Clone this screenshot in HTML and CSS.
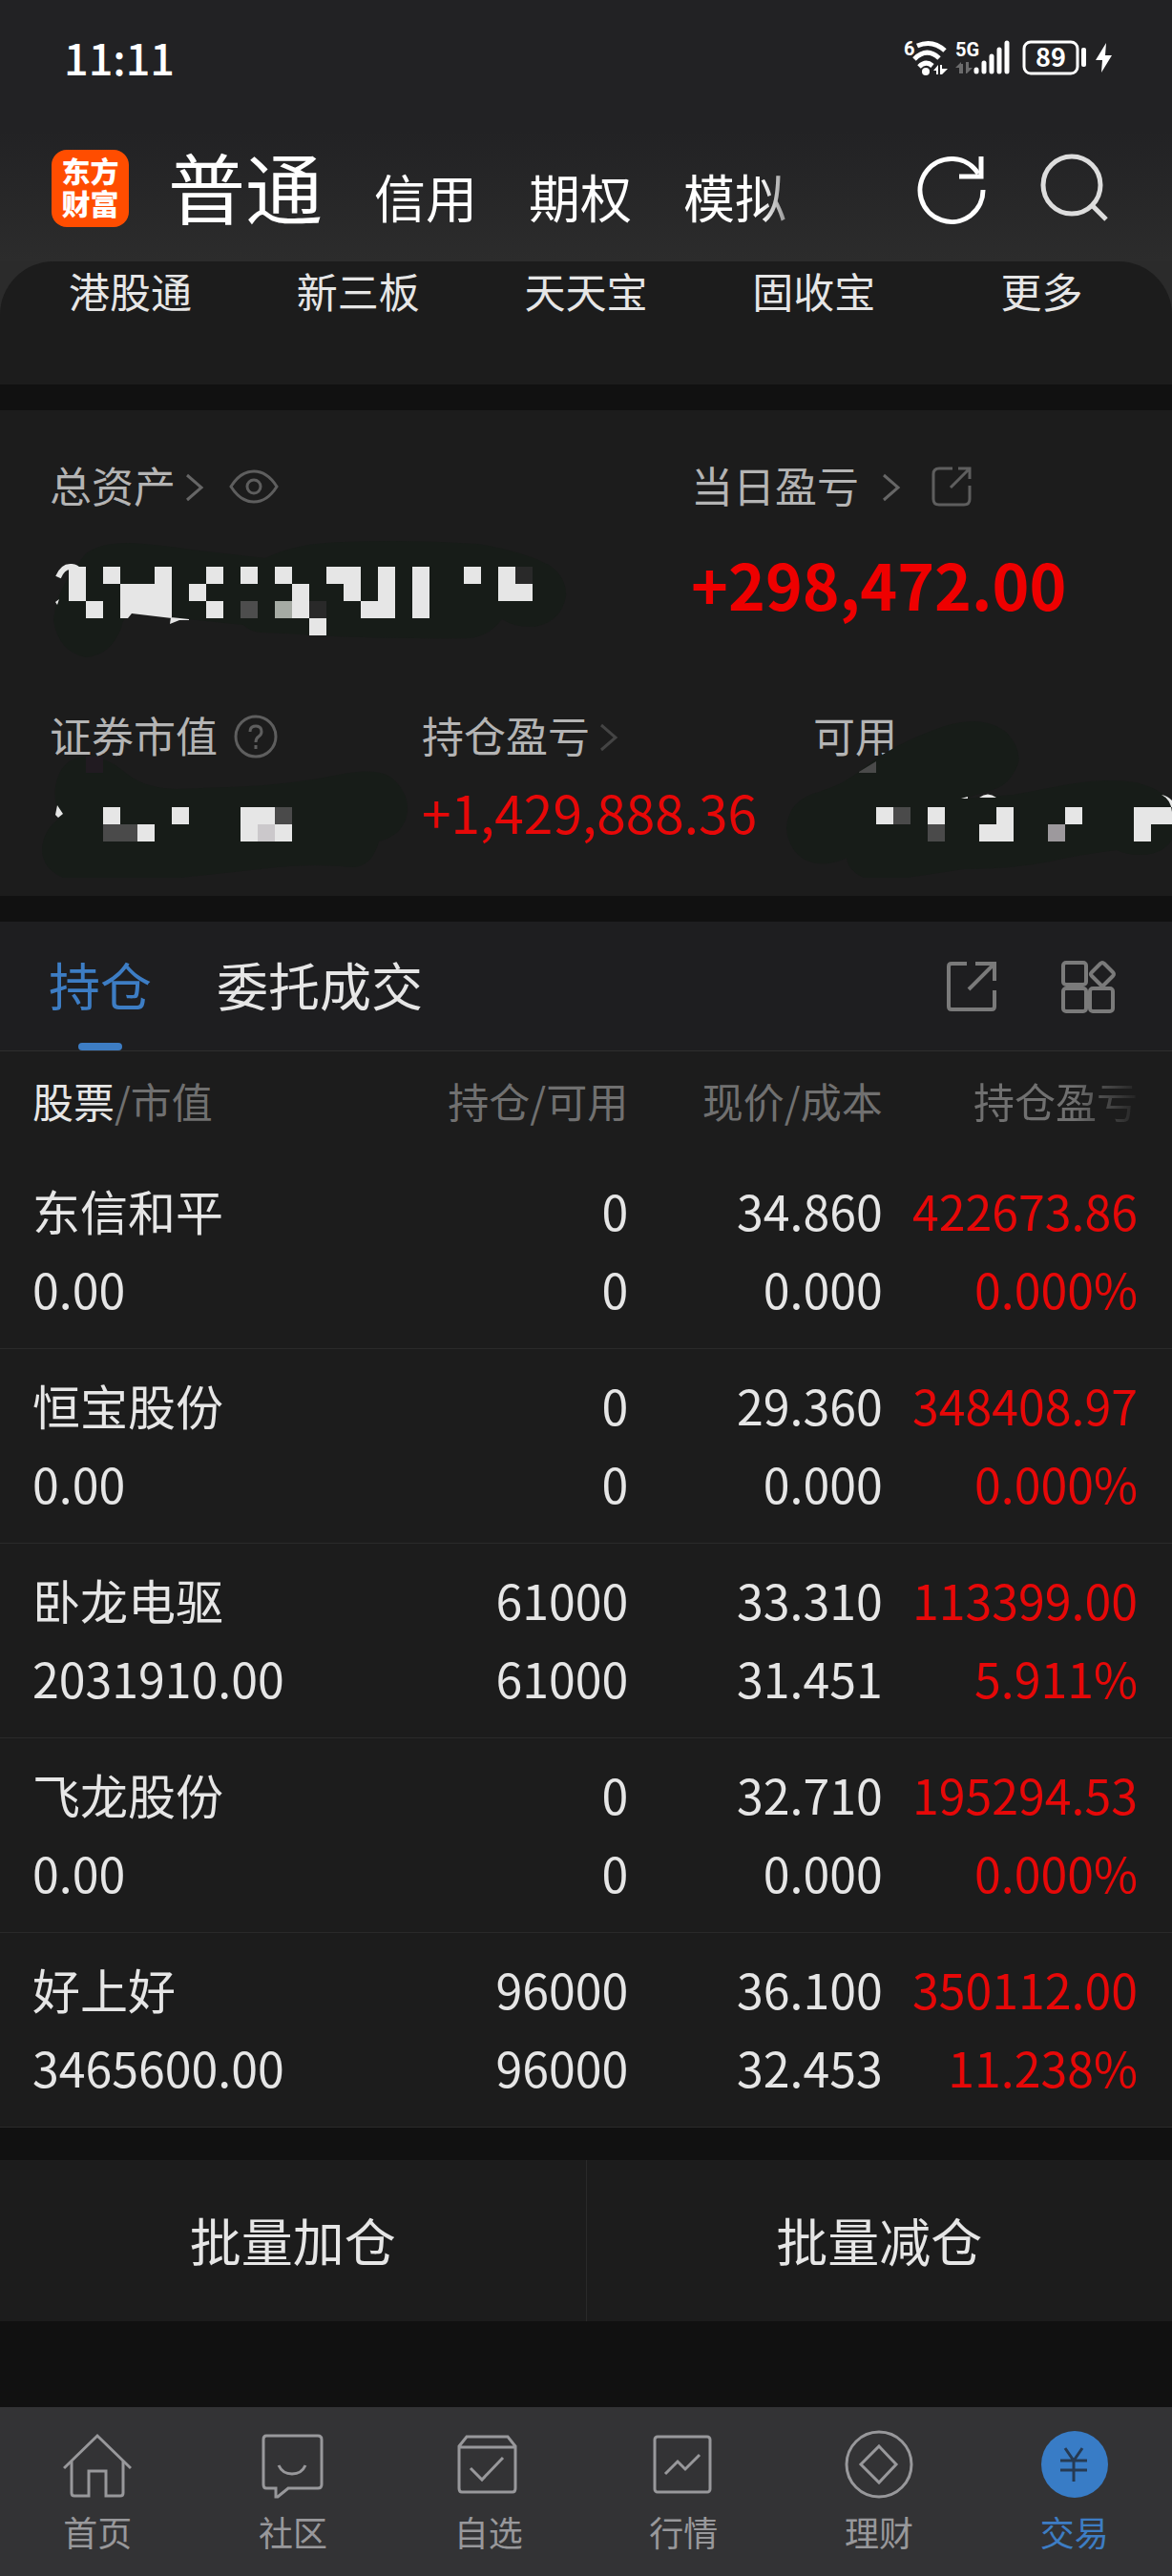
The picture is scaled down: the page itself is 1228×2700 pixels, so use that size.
FILE: index.html
```html
<!DOCTYPE html>
<html lang="zh-CN">
<head>
    <meta charset="UTF-8">
    <meta name="viewport" content="width=device-width, initial-scale=1.0">
    <title>交易</title>

    <link rel="stylesheet" href="styles.css">
</head>

<body>
    <header class="top">
        <div class="status-bar">
            <div class="time">11:11</div>
            <svg class="status-icons" viewBox="944 38 224 46" width="224" height="46">
                <text class="net" x="947" y="59">6</text>
                <g fill="none" stroke="#fff" stroke-width="5">
                    <path d="M961 49 Q977 42 990 54" />
                    <path d="M958 63 Q971 50 984 62" />
                    <path d="M963 71 Q970 64 977 70" />
                </g>
                <circle cx="970" cy="76" r="4" fill="#fff" />
                <path d="M978 75 L983 69 V79 H981 V75 Z M985 69 H987 V73 H993 L987 79 H985 Z" fill="#fff" />
                <text class="net" x="1001" y="60">5G</text>
                <path d="M1001 72 L1007 66 V78 H1005 V72 Z M1005 68 H1009 V78 H1005 Z M1012 66 H1015 V72 H1019 L1013 78 H1012 Z" fill="#6b6b6c" />
                <g stroke="#fff" stroke-width="5" stroke-linecap="round">
                    <path d="M1023 74 V76" />
                    <path d="M1031 67 V76" />
                    <path d="M1039 60 V76" />
                    <path d="M1047 53 V76" />
                    <path d="M1055 46 V76" />
                </g>
                <rect x="1073" y="45" width="56" height="33" rx="7" fill="none" stroke="#fff" stroke-width="3" />
                <rect x="1133" y="51" width="5" height="20" rx="2" fill="#fff" />
                <text class="battery" x="1101" y="71">89</text>
                <path d="M1159 46 L1148 64 H1155 L1154 77 L1165 59 H1158 Z" fill="#fff" />
            </svg>
        </div>
        <div class="header-row">
            <div class="logo">东方<br>财富</div>
            <nav class="account-tabs">
                <button class="account active">普通</button>
                <button class="account">信用</button>
                <button class="account">期权</button>
                <button class="account fade">模拟</button>
            </nav>
            <button class="icon-btn" aria-label="刷新">
                <svg viewBox="0 0 80 80" width="80" height="80" fill="none" stroke="#fff" stroke-width="5">
                    <path d="M72 42 A33 33 0 1 1 67 25" />
                    <path d="M70 7 V28 H47" />
                </svg>
            </button>
            <button class="icon-btn" aria-label="搜索">
                <svg viewBox="0 0 80 80" width="80" height="80" fill="none" stroke="#ddd" stroke-width="5">
                    <circle cx="38" cy="37" r="30" />
                    <path d="M59 58 L74 73" />
                </svg>
            </button>
        </div>
    </header>

    <div class="menu-wrap">
        <nav class="menu">
            <a href="#">港股通</a>
            <a href="#">新三板</a>
            <a href="#">天天宝</a>
            <a href="#">固收宝</a>
            <a href="#">更多</a>
        </nav>
    </div>

    <main>
        <section class="assets">
            <div class="assets-main">
                <div class="asset">
                    <div class="label">
                        总资产
                        <svg class="arrow" viewBox="0 0 20 32" width="20" height="32"><path d="M2 4 L17 17 L2 30" /></svg>
                        <button class="icon-btn eye" aria-label="隐藏金额">
                            <svg viewBox="0 0 52 36" width="52" height="36" fill="none" stroke="#5e5e5e" stroke-width="3">
                                <path d="M2 18 Q12 2 26 2 Q40 2 50 18 Q40 34 26 34 Q12 34 2 18 Z" />
                                <circle cx="26" cy="18" r="7" />
                            </svg>
                        </button>
                    </div>
                    <!-- covered amount -->
                    <svg class="covered big" viewBox="52 561 550 130" width="550" height="130">
                        <path class="smudge" d="M90 580 Q106 569 134 569 Q160 570 200 576 L278 585 Q310 569 360 568 Q430 565 500 570 Q545 577 575 592 Q594 605 593 625 Q588 652 560 657 Q540 658 526 649 Q512 667 492 669 Q380 670 300 664 L274 663 Q262 662 255 655 L138 643 Q129 646 127 658 Q116 687 90 689 Q61 683 56 650 Q58 625 75 600 Z" />
                        <path class="digit" d="M61 605 Q66 593 75 594 Q85 595 80 604 L74 610" />
                        <path fill="#e6e6e6" d="M72 594h18v36h-18z M108 594h18v18h-18z M162 594h18v54L138 643l-4 5h-8v-36h36z M90 630h18v18h-18z M216 594h18v18h-18z M198 612h18v18h-18z M216 630h18v18h-18z M252 594h18v18h-18z M288 594h18v18h-18z M306 612h18v36h-18z M324 648h18v18h-18z M342 594h36v36h-18v-18h-18z M396 594h18v54h-36v-18h18z M432 594h18v54h-18z M486 594h18v18h-18z M522 594h18v18h18v18h-36z M179 647l19 2v1h-10l-10 4z M58 631l4-3-2 6z" />
                        <path fill="#4d4d4d" d="M252 630h18v18h-18z" />
                        <path fill="#a6aba4" d="M288 630h18v18h-18z" />
                        <path fill="#292929" d="M540 594h18v18h-18z M324 630h18v18h-18z" />
                    </svg>
                </div>
                <div class="asset">
                    <div class="label">
                        当日盈亏
                        <svg class="arrow wide" viewBox="0 0 20 32" width="20" height="32"><path d="M2 4 L17 17 L2 30" /></svg>
                        <button class="icon-btn share" aria-label="分享">
                            <svg viewBox="0 0 42 42" width="42" height="42" fill="none" stroke="#5e5e5e" stroke-width="3">
                                <path d="M22 2 H8 Q2 2 2 8 V34 Q2 40 8 40 H34 Q40 40 40 34 V20" />
                                <path d="M28 2 H40 V13 M40 2 L20 22" />
                            </svg>
                        </button>
                    </div>
                    <div class="amount">+298,472.00</div>
                </div>
            </div>

            <div class="assets-sub">
                <div class="asset">
                    <div class="label">
                        证券市值
                        <svg class="help" viewBox="0 0 46 46" width="46" height="46">
                            <circle cx="23" cy="23" r="21" />
                            <path d="M17 18 Q17 12 23 12 Q29 12 29 18 Q29 21 26 23 Q23 25 23 29" />
                            <path d="M23 32 V36" />
                        </svg>
                    </div>
                    <svg class="covered" viewBox="52 800 376 120" width="376" height="120">
                        <path class="smudge" d="M58 825 Q63 793 92 793 Q112 794 128 807 Q148 826 185 827 L240 825 Q300 823 350 813 Q395 803 410 815 Q428 830 427 850 Q424 875 397 882 Q390 908 370 909 Q330 905 290 909 Q220 917 190 920 H66 Q44 910 44 890 Q45 870 63 857 Q56 840 58 825 Z" />
                        <path fill="#211b21" d="M90 793h18v17h-18z" />
                        <path fill="#e6e6e6" d="M108 846h18v18h-18z M180 846h18v18h-18z M144 864h18v18h-18z M252 846h36v18h18v18h-54z M60 844l6 9-5 4-3-3z" />
                        <path fill="#4a4a4a" d="M108 864h36v18h-36z M288 846h18v18h-18z" />
                        <path fill="#cbc8cb" d="M270 864h18v18h-18z" />
                    </svg>
                </div>
                <div class="asset">
                    <div class="label">
                        持仓盈亏
                        <svg class="arrow dim" viewBox="0 0 20 32" width="20" height="32"><path d="M2 4 L17 17 L2 30" /></svg>
                    </div>
                    <div class="amount small">+1,429,888.36</div>
                </div>
                <div class="asset">
                    <div class="label">可用</div>
                    <svg class="covered" viewBox="852 800 376 120" width="376" height="120">
                        <path class="smudge" d="M824 868 Q826 838 858 830 Q885 822 905 805 Q935 780 990 761 Q1030 748 1055 768 Q1070 785 1067 800 Q1058 823 1040 828 L1010 837 L1062 833 L1120 822 Q1160 815 1190 820 Q1228 830 1228 850 V880 Q1218 896 1195 896 Q1180 896 1170 891 Q1130 896 1100 903 Q1060 911 1010 911 L950 920 H905 Q888 912 887 899 Q865 910 845 902 Q826 892 824 868 Z" />
                        <path fill="#e6e6e6" d="M918 846h18v18h-18z M972 846h18v18h-18z M1044 846h18v36h-36v-18h18z M1116 846h18v18h-18z M1188 846h40v18h-22v18h-18z M1026 836q9-7 18 0z M1007 837l7-2v2z M1217 833q10 5 11 18v-12q-5-5-11-6z" />
                        <path fill="#4a4a4a" d="M900 809l18-11v12h-18z M936 846h18v18h-18z M972 864h18v18h-18z" />
                        <path fill="#9d999d" d="M1098 864h18v18h-18z" />
                    </svg>
                </div>
            </div>
        </section>

        <section class="positions">
            <div class="tabs">
                <button class="tab active">持仓</button>
                <button class="tab">委托成交</button>
                <div class="tools">
                    <button class="icon-btn" aria-label="分享持仓">
                        <svg viewBox="0 0 60 60" width="60" height="60" fill="none" stroke="#7a7a7a" stroke-width="4">
                            <path d="M25 6 H9 Q6 6 6 9 V51 Q6 54 9 54 H51 Q54 54 54 51 V34" />
                            <path d="M34 6 H54 V24 M54 6 L27 33" />
                        </svg>
                    </button>
                    <button class="icon-btn" aria-label="更多功能">
                        <svg viewBox="0 0 60 60" width="60" height="60" fill="none" stroke="#7a7a7a" stroke-width="4">
                            <rect x="4" y="5" width="24" height="23" rx="3" />
                            <rect x="4" y="32" width="24" height="24" rx="3" />
                            <rect x="32" y="32" width="24" height="24" rx="3" />
                            <path d="M43 6 Q45 4 47 6 L56 15 Q58 17 56 19 L47 28 Q45 30 43 28 L34 19 Q32 17 34 15 Z" />
                        </svg>
                    </button>
                </div>
            </div>

            <table class="stock-table">
                <thead>
                    <tr>
                        <th class="col-name"><span class="on">股票</span>/市值</th>
                        <th class="col-num">持仓/可用</th>
                        <th class="col-num">现价/成本</th>
                        <th class="col-last fade-head">持仓盈亏</th>
                    </tr>
                </thead>
                <tbody>
                    <tr>
                        <td>东信和平<br>0.00</td>
                        <td>0<br>0</td>
                        <td>34.860<br>0.000</td>
                        <td class="up">422673.86<br>0.000%</td>
                    </tr>
                    <tr>
                        <td>恒宝股份<br>0.00</td>
                        <td>0<br>0</td>
                        <td>29.360<br>0.000</td>
                        <td class="up">348408.97<br>0.000%</td>
                    </tr>
                    <tr>
                        <td>卧龙电驱<br>2031910.00</td>
                        <td>61000<br>61000</td>
                        <td>33.310<br>31.451</td>
                        <td class="up">113399.00<br>5.911%</td>
                    </tr>
                    <tr>
                        <td>飞龙股份<br>0.00</td>
                        <td>0<br>0</td>
                        <td>32.710<br>0.000</td>
                        <td class="up">195294.53<br>0.000%</td>
                    </tr>
                    <tr>
                        <td>好上好<br>3465600.00</td>
                        <td>96000<br>96000</td>
                        <td>36.100<br>32.453</td>
                        <td class="up">350112.00<br>11.238%</td>
                    </tr>
                </tbody>
            </table>
        </section>

        <div class="batch">
            <button>批量加仓</button>
            <button>批量减仓</button>
        </div>
    </main>

    <nav class="bottom-nav">
        <a href="#">
            <svg viewBox="0 0 72 72" width="72" height="72">
                <path d="M1 40 L36 6 L71 40" />
                <path d="M9 33 V66 Q9 69 12 69 H27 V43 H45 V69 H60 Q63 69 63 66 V33" />
            </svg>
            首页
        </a>
        <a href="#">
            <svg viewBox="0 0 72 72" width="72" height="72">
                <path d="M8 6 H62 Q66 6 66 10 V57 Q66 61 62 61 H31 L20 70 H18 V61 H8 Q5 61 5 57 V10 Q5 6 8 6 Z" />
                <path d="M21 37 Q25 46 35 46 Q45 46 49 37" />
            </svg>
            社区
        </a>
        <a href="#">
            <svg viewBox="0 0 72 72" width="72" height="72">
                <path d="M5 17 L13 7 H56 L64 17 V61 Q64 65 61 65 H8 Q5 65 5 61 Z M5 18 H64" />
                <path d="M17 40 L29 52 L51 29" />
            </svg>
            自选
        </a>
        <a href="#">
            <svg viewBox="0 0 72 72" width="72" height="72">
                <rect x="6" y="7" width="58" height="58" rx="3" />
                <path d="M17 46 L30 33 L38 41 L53 26" />
            </svg>
            行情
        </a>
        <a href="#">
            <svg viewBox="0 0 72 72" width="72" height="72">
                <circle cx="36" cy="36" r="34" />
                <path d="M36 17 L54 36 L36 55 L17 36 Z" />
            </svg>
            理财
        </a>
        <a href="#" class="active">
            <svg viewBox="0 0 72 72" width="72" height="72">
                <circle class="coin" cx="36" cy="36" r="35" />
                <path class="yen" d="M26 19 L35 32 L44 19 M21 32 H49 M21 42 H49 M35 32 V54" />
            </svg>
            交易
        </a>
    </nav>
</body>
</html>
```
FILE: styles.css
```css
*{
    box-sizing: border-box;
}
body{
    margin: 0;
    min-height: 100vh;
    display: flex;
    flex-direction: column;
    overflow-x: hidden;
    font-family: "Noto Sans CJK SC", sans-serif;
    background-color: #111111;
    color: #e6e6e6;
}
button{
    padding: 0;
    border: none;
    background: none;
    color: inherit;
    font-family: inherit;
}
a{
    color: inherit;
    text-decoration: none;
}
svg{
    display: block;
    flex-shrink: 0;
}

/* header */
.top{
    color: #ffffff;
    background: linear-gradient(#222224 50%, #2c2c2c);
}
.status-bar{
    height: 120px;
    padding: 0 60px 0 67px;
    display: flex;
    justify-content: space-between;
    align-items: center;
}
.time{
    font-size: 45px;
    font-weight: 500;
    line-height: 60px;
}
.net{
    font-family: Roboto, sans-serif;
    font-size: 20px;
    font-weight: 700;
    fill: #ffffff;
}
.battery{
    font-size: 27px;
    font-weight: 700;
    fill: #ffffff;
    text-anchor: middle;
}
.header-row{
    height: 154px;
    padding: 0 63px 0 54px;
    display: flex;
    align-items: center;
}
.logo{
    width: 81px;
    height: 81px;
    padding-top: 4px;
    border-radius: 16px;
    background-color: #ff4d00;
    font-size: 30px;
    font-weight: 900;
    line-height: 34px;
    text-align: center;
}
.account-tabs{
    flex: 1;
    display: flex;
    align-items: baseline;
    gap: 54px;
    margin-left: 41px;
    padding-top: 6px;
}
.account{
    font-size: 54px;
    line-height: 80px;
}
.account.active{
    font-size: 81px;
}
.fade{
    mask-image: linear-gradient(to right, #000 75%, rgba(0, 0, 0, 0.5));
}
.header-row .icon-btn{
    margin-left: 47px;
}

/* menu */
.menu-wrap{
    background-color: #2b2b2b;
}
.menu{
    height: 129px;
    padding: 0 17px;
    display: flex;
    border-radius: 56px 56px 0 0;
    background-color: #1c1c1c;
    font-size: 43px;
    line-height: 60px;
}
.menu a{
    flex: 1;
    text-align: center;
}

/* assets */
.assets{
    margin-top: 27px;
    padding: 48px 0 19px 52px;
    background-color: #1c1c1c;
}
.assets-main{
    display: grid;
    grid-template-columns: 672fr 504fr;
}
.assets-sub{
    display: grid;
    grid-template-columns: 390fr 410fr 376fr;
    margin-top: 49px;
}
.asset{
    min-width: 0;
}
.label{
    height: 60px;
    display: flex;
    align-items: center;
    font-size: 44px;
    line-height: 60px;
    color: #b4b4b4;
}
.label svg{
    margin-top: 4px;
}
.arrow{
    margin-left: 10px;
    fill: none;
    stroke: #666666;
    stroke-width: 3;
}
.arrow.wide{
    margin-left: 24px;
}
.arrow.dim{
    stroke: #444444;
}
.eye{
    margin-left: 26px;
}
.share{
    margin-left: 32px;
}
.help{
    margin-left: 17px;
    fill: none;
    stroke: #5e5e5e;
    stroke-width: 3;
}
.amount{
    margin-top: 23px;
    font-size: 66px;
    font-weight: 700;
    line-height: 100px;
    color: #ee0000;
}
.amount.small{
    margin-top: 0;
    font-size: 55px;
    font-weight: 400;
    color: #e60808;
}
.covered{
    overflow: visible;
}
.covered.big{
    margin-top: 23px;
}
.smudge{
    fill: #171c18;
}
.digit{
    fill: none;
    stroke: #e6e6e6;
    stroke-width: 6;
}

/* positions */
.positions{
    margin-top: 27px;
    background-color: #1c1c1c;
}
.tabs{
    height: 136px;
    padding: 0 58px 0 51px;
    display: flex;
    gap: 68px;
    border-bottom: 1px solid #2e2e2e;
    background-color: #1e1e20;
}
.tab{
    position: relative;
    padding-bottom: 3px;
    font-size: 54px;
    line-height: 128px;
}
.tab.active{
    color: #3d7dc4;
}
.tab.active::after{
    content: "";
    position: absolute;
    left: 50%;
    bottom: 0;
    width: 46px;
    height: 8px;
    margin-left: -23px;
    border-radius: 4px;
    background-color: #3d7dc4;
}
.tools{
    margin-left: auto;
    display: flex;
    align-items: center;
    gap: 62px;
}
.stock-table{
    width: 100%;
    table-layout: fixed;
    border-collapse: collapse;
}
.col-name{
    width: 31.9%;
}
.col-num{
    width: 21.7%;
}
th{
    height: 108px;
    padding: 0 0 6px;
    font-size: 43px;
    font-weight: 400;
    text-align: right;
    color: #707070;
}
.on{
    color: #e6e6e6;
}
.fade-head{
    mask-image: linear-gradient(to right, #000 66%, transparent 90%);
}
td{
    padding: 17px 0 22px;
    border-bottom: 1px solid #2a2a2a;
    font-size: 50px;
    line-height: 82px;
    text-align: right;
    white-space: nowrap;
}
th:first-child,
td:first-child{
    padding-left: 34px;
    text-align: left;
}
th:last-child,
td:last-child{
    padding-right: 36px;
}
.up{
    color: #e60808;
}

/* batch buttons */
.batch{
    margin-top: 34px;
    display: flex;
    background-color: #1c1c1c;
}
.batch button{
    flex: 1;
    height: 169px;
    padding-bottom: 3px;
    font-size: 54px;
}
.batch button + button{
    border-left: 1px solid #2a2a2a;
}

/* bottom nav */
.bottom-nav{
    margin-top: auto;
    padding: 24px 0 27px;
    display: flex;
    background-color: #333335;
    color: #98989b;
}
.bottom-nav a{
    flex: 1;
    display: flex;
    flex-direction: column;
    align-items: center;
    gap: 14px;
    font-size: 36px;
    line-height: 40px;
}
.bottom-nav svg{
    fill: none;
    stroke: #98989b;
    stroke-width: 3;
}
.bottom-nav .active{
    color: #3d7dc4;
}
.bottom-nav .coin{
    fill: #387cc6;
    stroke: none;
}
.bottom-nav .yen{
    stroke: #263a52;
}
```
